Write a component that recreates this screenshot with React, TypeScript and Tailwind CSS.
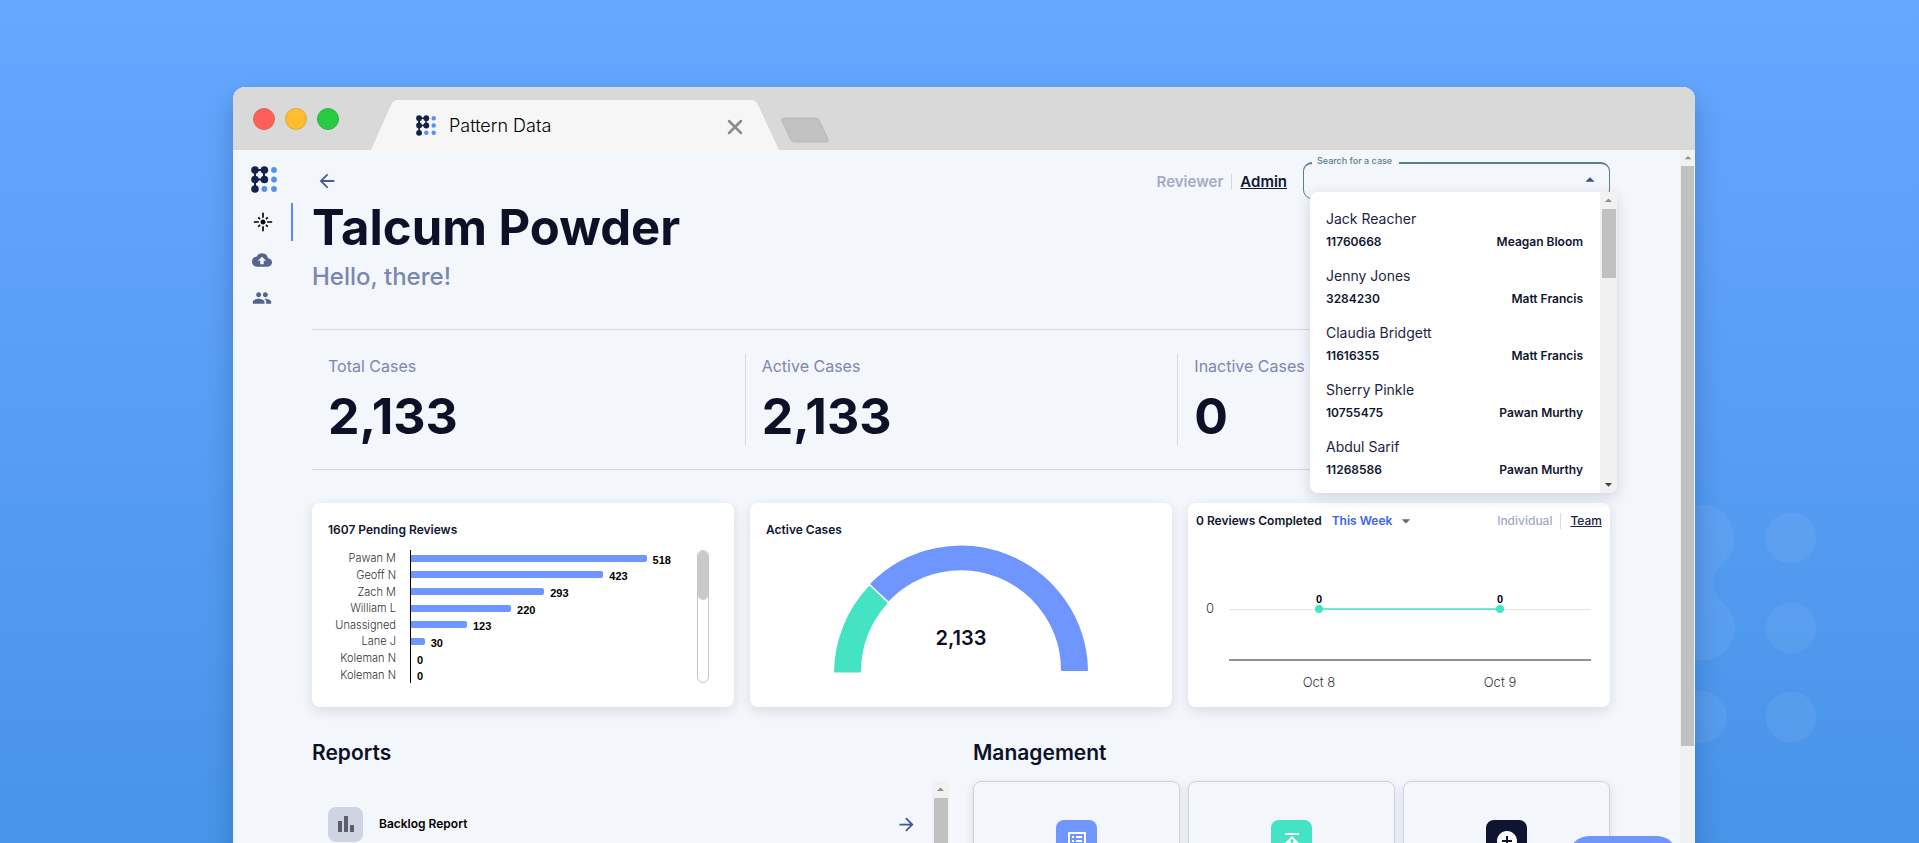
import React from 'react';
import {
  MdFlare,
  MdCloudUpload,
  MdPeople,
  MdArrowBack,
  MdArrowForward,
  MdArrowDropUp,
  MdArrowDropDown,
  MdBarChart,
  MdListAlt,
  MdAddCircle,
} from 'react-icons/md';

const people = [
  { name: 'Jack Reacher', id: '11760668', owner: 'Meagan Bloom' },
  { name: 'Jenny Jones', id: '3284230', owner: 'Matt Francis' },
  { name: 'Claudia Bridgett', id: '11616355', owner: 'Matt Francis' },
  { name: 'Sherry Pinkle', id: '10755475', owner: 'Pawan Murthy' },
  { name: 'Abdul Sarif', id: '11268586', owner: 'Pawan Murthy' },
];

const pending = [
  { name: 'Pawan M', count: 518 },
  { name: 'Geoff N', count: 423 },
  { name: 'Zach M', count: 293 },
  { name: 'William L', count: 220 },
  { name: 'Unassigned', count: 123 },
  { name: 'Lane J', count: 30 },
  { name: 'Koleman N', count: 0 },
  { name: 'Koleman N', count: 0 },
];

const stats = [
  { label: 'Total Cases', value: '2,133' },
  { label: 'Active Cases', value: '2,133' },
  { label: 'Inactive Cases', value: '0' },
];

function Logo({ className }: { className: string }) {
  return (
    <svg viewBox="0 0 26 27" className={className} aria-hidden="true">
      <g stroke="#14224a" strokeWidth="2">
        <path d="M4 4h9v9.500h-9z" fill="none" />
        <path d="M4 4v19" />
      </g>
      <g fill="#14224a">
        <circle cx="4" cy="4" r="3.800" />
        <circle cx="13.400" cy="4" r="3.800" />
        <circle cx="4" cy="13.500" r="3.800" />
        <circle cx="13.400" cy="13.500" r="3.800" />
        <circle cx="4" cy="23" r="3.800" />
      </g>
      <g fill="#5593e6">
        <circle cx="23" cy="4" r="2.900" />
        <circle cx="23" cy="13.500" r="2.900" />
        <circle cx="13.400" cy="23" r="2.900" />
        <circle cx="23" cy="23" r="2.900" />
      </g>
    </svg>
  );
}

function Backdrop() {
  return (
    <svg className="absolute top-[500px] right-[100px] h-[250px] w-[150px]" viewBox="0 0 150 250" aria-hidden="true">
      <g fill="#ffffff" fillOpacity="0.06">
        <path d="M33 5a33 33 0 0 1 23 56c-12 12-19 28 0 43a33 33 0 1 1-46 0c12-12 12-31 0-43a33 33 0 0 1 23-56z" />
        <circle cx="32" cy="217" r="26" />
        <circle cx="122" cy="38" r="25.500" />
        <circle cx="122" cy="128" r="25.500" />
        <circle cx="122" cy="217" r="25.500" />
      </g>
    </svg>
  );
}

function TabStrip() {
  return (
    <header className="flex h-[63px] items-end rounded-t-xl bg-[#d9d9d9] pl-5">
      <div className="flex h-[63px] items-center gap-[10px]">
        <span className="size-[22px] rounded-full border border-[#e0605c] bg-[#fe5f57]" />
        <span className="size-[22px] rounded-full border border-[#dfa93a] bg-[#febc2e]" />
        <span className="size-[22px] rounded-full border border-[#2fb445] bg-[#28ca41]" />
      </div>
      <div className="relative ml-8 h-[50px] w-[408px]">
        <svg className="absolute inset-0 size-full" viewBox="0 0 408 50" aria-hidden="true">
          <path d="M0 50 20 5Q22 0 27 0H380Q385 0 387 5L408 50z" fill="#f6f6f6" />
        </svg>
        <div className="relative flex h-full items-center pr-9 pl-[45px]">
          <Logo className="h-[21px] w-5" />
          <span className="ml-[13px] flex-1 text-[18px] font-light text-black">Pattern Data</span>
          <button type="button" aria-label="Close tab" className="pt-1">
            <svg width="16" height="16" viewBox="0 0 16 16" aria-hidden="true">
              <path d="M2 2l12 12M14 2L2 14" stroke="#8c8c8c" strokeWidth="2.500" strokeLinecap="round" />
            </svg>
          </button>
        </div>
      </div>
      <button type="button" aria-label="New tab" className="mb-[7px] ml-[2px]">
        <svg width="48" height="26" viewBox="0 0 48 26" aria-hidden="true">
          <path d="M4 1H34Q37 1 38 3L47 22Q48 25 45 25H14Q11 25 10 23L1 4Q0 1 4 1z" fill="#c2c2c2" stroke="#b8b8b8" />
        </svg>
      </button>
    </header>
  );
}

function Sidebar() {
  return (
    <nav className="flex w-[60px] shrink-0 flex-col pt-4">
      <a href="#home" aria-label="Home" className="ml-[18px]">
        <Logo className="h-[27px] w-[26px]" />
      </a>
      <a href="#dashboard" aria-label="Dashboard" className="mt-[10px] flex h-[38px] items-center border-r-2 border-[#5b86f7] pl-5 text-black">
        <MdFlare size={20} />
      </a>
      <a href="#uploads" aria-label="Uploads" className="flex h-[38px] items-center pl-[19px] text-[#55648f]">
        <MdCloudUpload size={20} />
      </a>
      <a href="#team" aria-label="Team" className="flex h-[38px] items-center pl-[19px] text-[#55648f]">
        <MdPeople size={20} />
      </a>
    </nav>
  );
}

function CaseSearch() {
  return (
    <div className="relative ml-4 w-[307px]">
      <fieldset className="flex h-[43px] items-center rounded-[9px] border border-t-2 border-[#5c7f8c] pl-2">
        <legend className="h-[14px] pr-[7px] pl-[5px] text-[9px] leading-[10px] font-medium text-[#5c7f8c]">
          <label htmlFor="case" className="block">Search for a case</label>
        </legend>
        <input id="case" className="h-5 min-w-0 flex-1 bg-transparent text-sm outline-none" />
        <button type="button" aria-label="Close list" className="mr-2 mb-2 text-[#3f5188]">
          <MdArrowDropUp size={22} />
        </button>
      </fieldset>
      <div className="absolute top-9 left-[7px] z-10 flex w-[307px] overflow-hidden rounded-lg bg-white shadow-[0_4px_14px_rgba(20,30,60,0.16)]">
        <ul className="flex-1 pt-[14px] pr-[17px] pb-[2px] pl-4">
          {people.map((p) => (
            <li key={p.id} className="h-[57px]">
              <p className="text-[14px] leading-[26px] text-[#1d2440]">{p.name}</p>
              <p className="flex justify-between text-[12px] leading-5 font-semibold text-[#10162f]">
                <span>{p.id}</span>
                <span>{p.owner}</span>
              </p>
            </li>
          ))}
        </ul>
        <div className="flex w-[17px] flex-col items-center bg-[#f1f1f1] text-[#8f8f8f]">
          <MdArrowDropUp size={17} />
          <div className="h-[69px] w-[14px] bg-[#c1c1c1]" />
          <MdArrowDropDown size={17} className="mt-auto text-[#404040]" />
        </div>
      </div>
    </div>
  );
}

function PendingCard() {
  return (
    <section className="h-[204px] rounded-lg bg-white px-4 pt-4 shadow-[0_4px_12px_rgba(30,45,80,0.13)]">
      <h2 className="text-[12px] leading-[22px] font-semibold text-[#10162f]">1607 Pending Reviews</h2>
      <div className="mt-[9px] flex h-[133px]">
        <ul className="flex w-[68px] flex-col text-right text-[11px] font-light text-[#333333]">
          {pending.map((p, i) => (
            <li key={i} className="flex flex-1 items-center justify-end leading-4">{p.name}</li>
          ))}
        </ul>
        <ul className="ml-[14px] flex flex-1 flex-col border-l border-black">
          {pending.map((p, i) => (
            <li key={i} className="flex flex-1 items-center">
              <span className="h-[7px] rounded-r-[2px] bg-[#6f95ff]" style={{ width: `${p.count * 0.159}%` }} />
              <span className="pt-[3px] pl-[6px] font-['Liberation_Sans',sans-serif] text-[11px] leading-3 font-bold text-black">{p.count}</span>
            </li>
          ))}
        </ul>
        <div className="mr-[9px] w-3 rounded-full border border-[#c4c4c4]">
          <div className="h-[49px] rounded-full bg-[#c9c9c9]" />
        </div>
      </div>
    </section>
  );
}

function ActiveCard() {
  return (
    <section className="h-[204px] rounded-lg bg-white px-4 pt-4 shadow-[0_4px_12px_rgba(30,45,80,0.13)]">
      <h2 className="text-[12px] leading-[22px] font-semibold text-[#10162f]">Active Cases</h2>
      <div className="relative mx-auto mt-1 w-[256px]">
        <svg viewBox="0 0 256 129" className="w-full" aria-hidden="true">
          <g strokeWidth="2" strokeLinejoin="round">
            <path d="M2 126.500A126 126 0 0 1 36.500 42L53.500 58A101 101 0 0 0 27 126.500z" fill="#44e3c4" stroke="#44e3c4" />
            <path d="M38.500 39A126 126 0 0 1 254 125H229A101 101 0 0 0 55.500 55z" fill="#6f95ff" stroke="#6f95ff" />
          </g>
        </svg>
        <p className="absolute inset-x-0 top-[81px] text-center text-[20px] leading-6 font-semibold text-[#0a0f24]">2,133</p>
      </div>
    </section>
  );
}

function CompletedCard() {
  return (
    <section className="h-[204px] rounded-lg bg-white px-2 shadow-[0_4px_12px_rgba(30,45,80,0.13)]">
      <div className="flex h-9 items-center text-[12px] leading-4">
        <h2 className="font-semibold text-[#10162f]">0 Reviews Completed</h2>
        <button type="button" className="ml-[10px] flex items-center font-semibold text-[#3d63f2]">
          This Week
          <MdArrowDropDown size={20} className="ml-1 text-[#666666]" />
        </button>
        <button type="button" className="ml-auto border-r border-[#d9dce6] pr-2 font-medium text-[#a4aac6]">Individual</button>
        <button type="button" className="ml-[9px] font-medium text-[#1d2440] underline">Team</button>
      </div>
      <svg viewBox="0 0 406 160" className="w-full" aria-hidden="true">
        <path d="M33 70.500H395" stroke="#e4e4e4" />
        <path d="M33 121H395" stroke="#6a6f6c" strokeWidth="1.500" />
        <path d="M123 70H304" stroke="#44e3c4" strokeWidth="1.500" />
        <circle cx="123" cy="70" r="4" fill="#44e3c4" />
        <circle cx="304" cy="70" r="4" fill="#44e3c4" />
        <g textAnchor="middle" fill="#000" fontSize="11" fontWeight="700" fontFamily="Liberation Sans">
          <text x="123" y="64">0</text>
          <text x="304" y="64">0</text>
        </g>
        <g textAnchor="middle" fill="#333" fontSize="13" fontWeight="300">
          <text x="14" y="74">0</text>
          <text x="123" y="148">Oct 8</text>
          <text x="304" y="148">Oct 9</text>
        </g>
      </svg>
    </section>
  );
}

function Tile({ label, color, children }: { label: string; color: string; children: React.ReactNode }) {
  return (
    <a href="#manage" aria-label={label} className="flex h-40 justify-center rounded-lg border border-[#cdd2de] pt-[38px] shadow-[0_3px_10px_rgba(30,45,80,0.12)]">
      <span className={`flex size-[41px] items-center justify-center rounded-lg text-white ${color}`}>{children}</span>
    </a>
  );
}

export default function App() {
  return (
    <div className="relative h-screen overflow-hidden bg-linear-to-b from-[#66a7ff] to-[#4794e8] pt-[87px] pr-[224px] pl-[233px] font-[Inter,sans-serif]">
      <Backdrop />
      <div className="relative rounded-t-xl bg-[#f3f6fb] shadow-[0_12px_24px_rgba(20,60,120,0.35)]">
        <TabStrip />
        <div className="flex">
          <Sidebar />
          <main className="min-w-0 flex-1 pr-[70px] pl-[19px]">
            <div className="flex h-[49px] items-start pt-[6px]">
              <button type="button" aria-label="Back" className="mt-[14px] ml-1 text-[#4a5c96]">
                <MdArrowBack size={22} />
              </button>
              <div className="mt-[14px] ml-auto flex text-[15px] leading-6 font-semibold">
                <button type="button" className="text-[#a4aac6]">Reviewer</button>
                <span className="mx-2 my-1 w-px bg-[#d3d7e2]" />
                <button type="button" className="text-[#10162f] underline">Admin</button>
              </div>
              <CaseSearch />
            </div>
            <h1 className="mt-1 text-[49px] leading-[50px] font-bold text-[#0c1128]">Talcum Powder</h1>
            <p className="mt-2 text-[24px] leading-8 font-medium text-[#7c87ae]">Hello, there!</p>
            <div className="mt-9 grid grid-cols-3 border-y border-[#d3d8e1] py-6">
              {stats.map((s) => (
                <div key={s.label} className="h-[91px] border-l border-[#d3d8e1] pl-4 first:border-l-0">
                  <p className="text-[16px] leading-6 text-[#7c87ae]">{s.label}</p>
                  <p className="mt-2 text-[50px] leading-[60px] font-bold text-[#0c1128]">{s.value}</p>
                </div>
              ))}
            </div>
            <div className="mt-[33px] grid grid-cols-3 gap-4">
              <PendingCard />
              <ActiveCard />
              <CompletedCard />
            </div>
            <div className="mt-8 grid grid-cols-2 gap-6">
              <section>
                <h2 className="text-[21px] leading-7 font-semibold text-[#0c1128]">Reports</h2>
                <div className="mt-[14px] flex">
                  <a href="#backlog" className="mt-[25px] mr-[15px] ml-4 flex h-9 flex-1 items-center">
                    <span className="flex size-[35px] items-center justify-center rounded-lg bg-[#ced4e2] text-[#5a5f6b]">
                      <MdBarChart size={24} />
                    </span>
                    <span className="ml-4 flex-1 text-[12px] font-semibold text-black">Backlog Report</span>
                    <MdArrowForward size={21} className="text-[#3f5691]" />
                  </a>
                  <div className="flex h-40 w-[17px] flex-col items-center bg-[#f1f1f1] text-[#8f8f8f]">
                    <MdArrowDropUp size={17} />
                    <div className="w-[14px] flex-1 bg-[#c1c1c1]" />
                  </div>
                </div>
              </section>
              <section>
                <h2 className="text-[21px] leading-7 font-semibold text-[#0c1128]">Management</h2>
                <div className="mt-[14px] grid grid-cols-3 gap-2">
                  <Tile label="Lists" color="bg-[#6f95ff]"><MdListAlt size={24} /></Tile>
                  <Tile label="Publish" color="bg-[#44e3c4]">
                    <svg width="24" height="24" viewBox="0 0 24 24" fill="currentColor" aria-hidden="true">
                      <path d="M5 4v2h14V4H5zm0 10h4v6h6v-6h4l-7-7-7 7zm8-2v6h-2v-6H9.830L12 9.830 14.170 12H13z" />
                    </svg>
                  </Tile>
                  <Tile label="Add" color="bg-[#0f1430]"><MdAddCircle size={24} /></Tile>
                </div>
              </section>
            </div>
          </main>
          <div className="flex w-[15px] shrink-0 flex-col items-center bg-[#f1f1f1] text-[#8f8f8f]">
            <MdArrowDropUp size={16} />
            <div className="h-[580px] w-[13px] bg-[#c1c1c1]" />
          </div>
        </div>
        <button type="button" aria-label="Help" className="absolute top-[749px] right-[18px] h-10 w-[108px] rounded-full bg-[#6f95ff]" />
      </div>
    </div>
  );
}
